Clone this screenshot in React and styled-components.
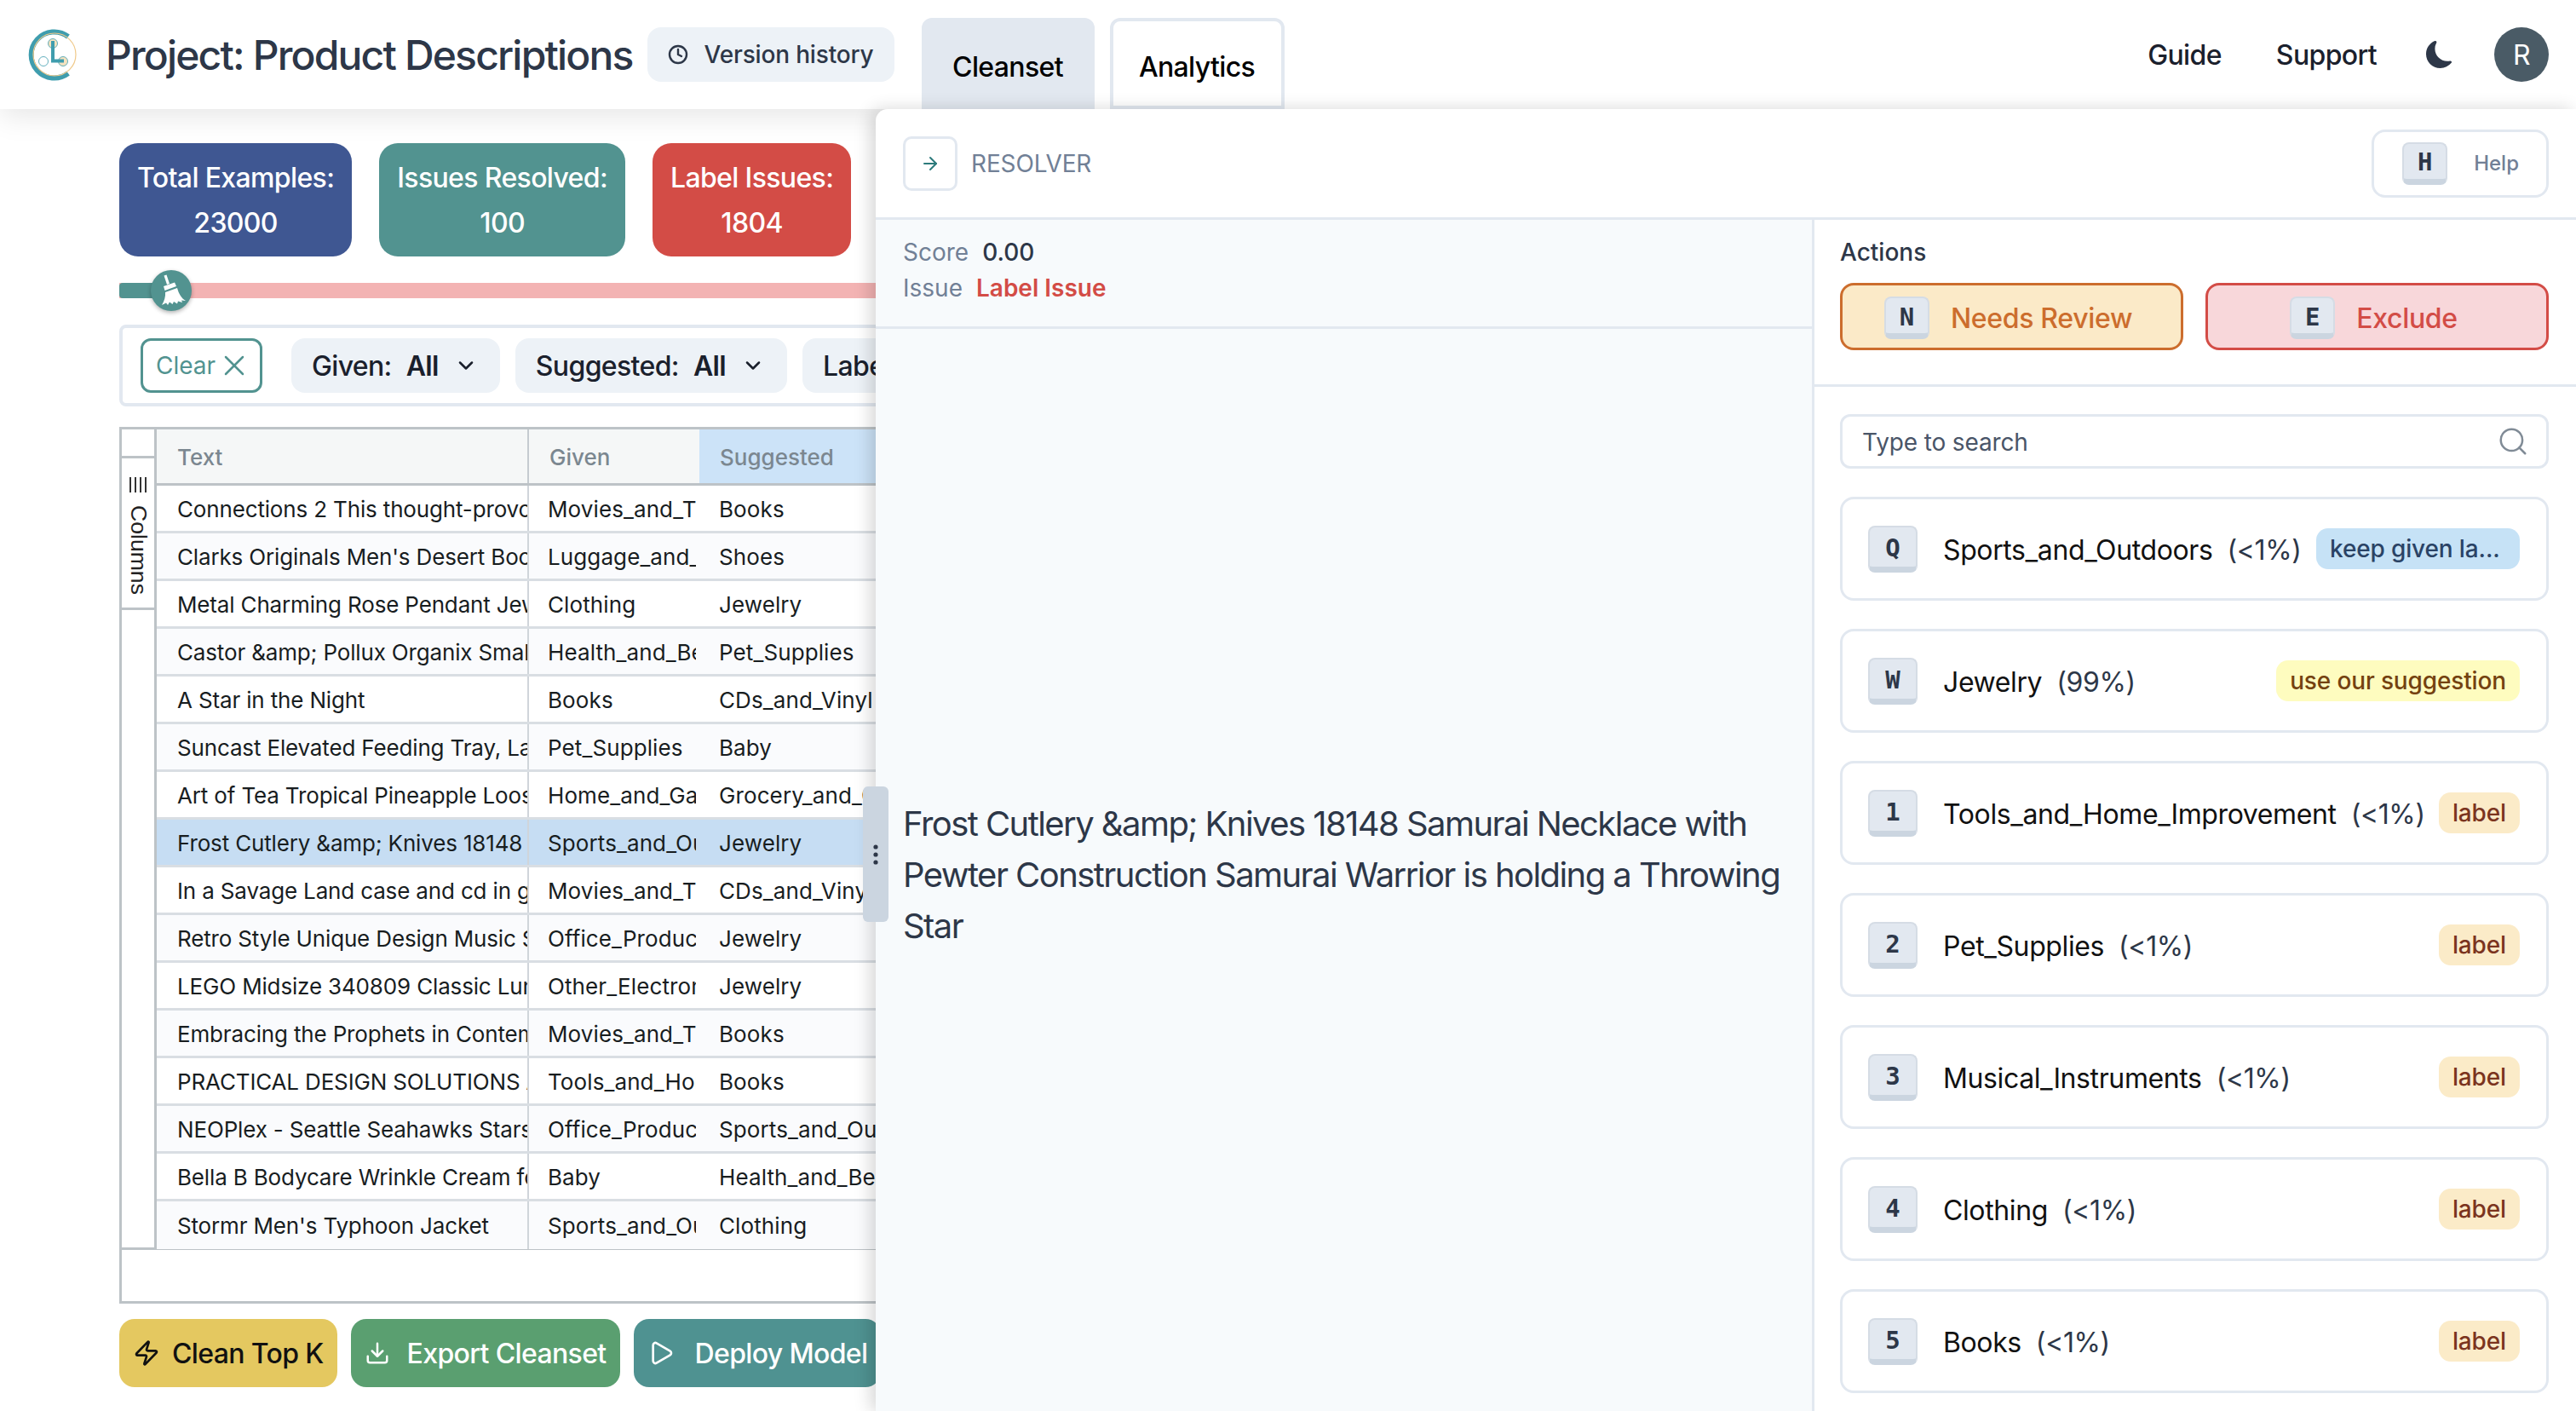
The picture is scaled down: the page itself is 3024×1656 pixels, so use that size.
import React from "react";
import styled, { createGlobalStyle } from "styled-components";
import { ArrowRight, ChevronDown, Clock, Download, Play, Search, X, Zap } from "lucide-react";
import { BsMoonFill } from "react-icons/bs";

const GlobalStyle = createGlobalStyle`
  html, body {
    margin: 0;
    padding: 0;
    background: #fff;
    font-family: Inter, "Liberation Sans", sans-serif;
    color: #2d3748;
  }
  * { box-sizing: border-box; }
`;

const Page = styled.div`
  position: relative;
  width: 3024px;
  height: 1656px;
  overflow: hidden;
  background: #fff;
`;

const Header = styled.header`
  position: relative;
  z-index: 2;
  display: flex;
  align-items: stretch;
  height: 128px;
  padding: 0 32px;
  background: #fff;
  box-shadow: 0 8px 32px rgba(0, 0, 0, 0.1);
`;
const LogoBox = styled.div`
  display: flex;
  align-items: center;
  width: 92px;
`;
const Title = styled.h1`
  align-self: center;
  margin: 0 17px 0 0;
  font-size: 48px;
  font-weight: 500;
  letter-spacing: -0.038em;
  color: #2d3748;
  white-space: nowrap;
`;
const VersionButton = styled.div`
  align-self: center;
  display: flex;
  align-items: center;
  gap: 19px;
  height: 64px;
  padding: 0 24px;
  border-radius: 16px;
  background: #edf2f7;
  font-size: 28px;
  font-weight: 500;
  letter-spacing: -0.006em;
  color: #2d3748;
`;
const Tabs = styled.nav`
  display: flex;
  align-items: flex-end;
  gap: 18px;
  margin-left: 32px;
`;
const Tab = styled.div`
  display: flex;
  align-items: center;
  justify-content: center;
  width: ${(p) => p.$width}px;
  height: 107px;
  padding-top: 7px;
  border: 4px solid #e2e8f0;
  border-radius: 12px 12px 0 0;
  background: ${(p) => (p.$active ? "#e2e8f0" : "#fff")};
  font-size: 32px;
  font-weight: 500;
  letter-spacing: -0.02em;
  color: #000;
`;
const HeaderRight = styled.div`
  display: flex;
  align-items: center;
  margin-left: auto;
  font-size: 32px;
  font-weight: 500;
  letter-spacing: -0.02em;
  color: #1a202c;
`;
const NavLink = styled.span`
  margin-right: 64px;
`;
const MoonBox = styled.span`
  display: flex;
  margin: 0 48px 0 -6px;
  color: #2d3748;
`;
const Avatar = styled.div`
  display: flex;
  align-items: center;
  justify-content: center;
  width: 64px;
  height: 64px;
  border-radius: 50%;
  background: #4a5b66;
  color: #fff;
  font-size: 32px;
  font-weight: 400;
`;

const Workspace = styled.main`
  width: 1200px;
  padding: 40px 0 0 140px;
`;
const Stats = styled.div`
  display: flex;
  gap: 32px;
`;
const Stat = styled.div`
  display: flex;
  flex-direction: column;
  align-items: center;
  justify-content: center;
  gap: 14px;
  height: 133px;
  padding: 0 21px;
  border-radius: 22px;
  background: ${(p) => p.$color};
  font-size: 32px;
  font-weight: 500;
  letter-spacing: -0.02em;
  line-height: 39px;
  color: #fff;
`;
const Slider = styled.div`
  position: relative;
  height: 18px;
  margin-top: 31px;
  background: #f3b3b3;
`;
const SliderFill = styled.div`
  width: 60px;
  height: 100%;
  border-radius: 4px 0 0 4px;
  background: #529390;
`;
const SliderThumb = styled.div`
  position: absolute;
  top: -15px;
  left: 37px;
  display: flex;
  width: 48px;
  height: 48px;
  border-radius: 50%;
  background: #529390;
  box-shadow: 0 2px 5px rgba(0, 0, 0, 0.3);
`;
const FilterBar = styled.div`
  display: flex;
  align-items: center;
  gap: 18px;
  height: 96px;
  margin-top: 31px;
  padding-left: 21px;
  border: 4px solid #e2e8f0;
  border-radius: 8px;
  white-space: nowrap;
`;
const ClearButton = styled.div`
  display: flex;
  flex: none;
  align-items: center;
  gap: 2px;
  width: 143px;
  height: 64px;
  margin-right: 16px;
  padding: 0 0 0 15px;
  border: 3px solid #529390;
  border-radius: 12px;
  font-size: 28px;
  color: #529390;
`;
const FilterChip = styled.div`
  display: flex;
  flex: none;
  align-items: center;
  height: 64px;
  padding: 0 26px 0 24px;
  border-radius: 16px;
  background: #edf2f7;
  font-size: 32px;
  font-weight: 500;
  letter-spacing: -0.02em;
  color: #1a202c;
  b {
    margin-left: 17px;
    font-weight: 600;
  }
  svg {
    margin-left: 18px;
  }
`;

const Grid = styled.div`
  height: 1029px;
  margin-top: 24px;
  border: 3px solid #bdc3c7;
  border-right: 0;
  background: #fff;
`;
const GridInner = styled.div`
  display: flex;
  height: 963px;
  border-bottom: 3px solid #bdc3c7;
`;
const SideStrip = styled.div`
  flex: none;
  width: 41px;
  padding-top: 31px;
  border-right: 3px solid #bdc3c7;
`;
const SideButton = styled.div`
  display: flex;
  align-items: center;
  justify-content: flex-start;
  gap: 15px;
  width: 38px;
  height: 181px;
  padding-top: 22px;
  border-top: 3px solid #bdc3c7;
  border-bottom: 3px solid #bdc3c7;
  writing-mode: vertical-rl;
  font-size: 26.6px;
  font-family: "Liberation Sans", Arial, sans-serif;
  color: #222;
`;
const GridBody = styled.div`
  flex: 1;
  min-width: 0;
`;
const HeadRow = styled.div`
  display: grid;
  grid-template-columns: 437px 200px 1fr;
  height: 66px;
  background: #f5f7f7;
  border-bottom: 3px solid #bdc3c7;
`;
const HeadCell = styled.div`
  display: flex;
  align-items: center;
  padding: 2px 0 0 ${(p) => p.$pad}px;
  border-right: ${(p) => (p.$line ? "2px solid #c5cbd0" : "0")};
  background: ${(p) => (p.$hot ? "#cce3f8" : "transparent")};
  font-size: 26px;
  font-weight: 500;
  color: #7b8790;
`;
const Row = styled.div`
  display: grid;
  grid-template-columns: 437px 200px 1fr;
  height: 56px;
  border-bottom: 3px solid #d9dee3;
  background: ${(p) => (p.$selected ? "#c6ddf3" : p.$odd ? "#fafbfd" : "#fff")};
  &:last-child {
    border-bottom: 0;
  }
`;
const Cell = styled.div`
  display: flex;
  align-items: center;
  overflow: hidden;
  margin-right: ${(p) => p.$gapRight || 0}px;
  padding: 1px 0 0 ${(p) => p.$pad}px;
  border-right: ${(p) => (p.$line ? "2px solid #d0d5da" : "0")};
  font-size: 26px;
  letter-spacing: ${(p) => (p.$line ? "-0.006em" : "0.004em")};
  color: #181d1f;
  white-space: nowrap;
`;
const ActionRow = styled.div`
  display: flex;
  gap: 16px;
  margin-top: 18px;
  white-space: nowrap;
`;
const ActionButton = styled.div`
  display: flex;
  flex: none;
  align-items: center;
  gap: ${(p) => p.$gap}px;
  height: 80px;
  padding: 0 16px;
  border-radius: 18px;
  background: ${(p) => p.$bg};
  color: ${(p) => p.$fg};
  font-size: 32px;
  font-weight: 500;
  letter-spacing: -0.02em;
`;

const Panel = styled.aside`
  position: absolute;
  z-index: 3;
  top: 128px;
  left: 1028px;
  right: 0;
  bottom: 0;
  display: flex;
  flex-direction: column;
  border-radius: 14px 0 0 0;
  background: #fff;
  box-shadow: -6px 0 20px rgba(0, 0, 0, 0.16);
`;
const PanelHead = styled.div`
  display: flex;
  flex: none;
  align-items: center;
  justify-content: space-between;
  height: 130px;
  padding: 0 32px;
  border-bottom: 3px solid #e2e8f0;
`;
const PanelTitle = styled.div`
  display: flex;
  align-items: center;
  gap: 16px;
  font-size: 28px;
  letter-spacing: -0.005em;
  color: #718096;
`;
const BackButton = styled.div`
  display: flex;
  align-items: center;
  justify-content: center;
  width: 64px;
  height: 64px;
  border: 3px solid #e2e8f0;
  border-radius: 10px;
  color: #2c7a7b;
`;
const HelpBox = styled.div`
  display: flex;
  align-items: center;
  gap: 31px;
  height: 80px;
  padding: 0 32px 0 33px;
  border: 3px solid #e2e8f0;
  border-radius: 16px;
  font-size: 24px;
  font-weight: 500;
  color: #718096;
`;
const Kbd = styled.span`
  display: flex;
  flex: none;
  align-items: center;
  justify-content: center;
  width: ${(p) => p.$w || 53}px;
  height: ${(p) => p.$h || 50}px;
  padding-top: 2px;
  border: 2px solid #d5dce5;
  border-bottom: 7px solid #cbd5e0;
  border-radius: 8px;
  background: #e2e8f0;
  font-family: "DejaVu Sans Mono", "Liberation Mono", monospace;
  font-size: 29px;
  font-weight: 700;
  letter-spacing: 0;
  color: #2d3748;
`;
const PanelBody = styled.div`
  display: flex;
  flex: 1;
  min-height: 0;
`;
const Detail = styled.section`
  display: flex;
  flex: none;
  flex-direction: column;
  width: 1099px;
  background: #f7fafc;
`;
const Meta = styled.div`
  display: flex;
  flex: none;
  flex-direction: column;
  gap: 8px;
  height: 128px;
  padding: 21px 32px 0;
  border-bottom: 3px solid #e2e8f0;
  font-size: 28px;
  line-height: 34px;
`;
const MetaLine = styled.div`
  display: flex;
  gap: 16px;
  span {
    color: #718096;
  }
  b {
    font-weight: ${(p) => (p.$issue ? 600 : 500)};
    color: ${(p) => (p.$issue ? "#d34c46" : "#2d3748")};
  }
`;
const Sample = styled.div`
  display: flex;
  flex: 1;
  align-items: center;
  padding: 12px 32px 0;
  font-size: 40px;
  letter-spacing: -0.039em;
  line-height: 60px;
  color: #2d3748;
`;
const Handle = styled.div`
  position: absolute;
  z-index: 4;
  top: 795px;
  left: -15px;
  display: flex;
  align-items: center;
  justify-content: center;
  width: 30px;
  height: 159px;
  border-radius: 6px;
  background: #cbd5e0;
  color: #2d3748;
`;
const Choices = styled.section`
  flex: 1;
  min-width: 0;
  border-left: 3px solid #e2e8f0;
  background: #fff;
`;
const ActionsBlock = styled.div`
  height: 196px;
  padding: 20px 32px 0 30px;
  border-bottom: 3px solid #e2e8f0;
  h3 {
    margin: 0;
    font-size: 28px;
    font-weight: 500;
    line-height: 36px;
    color: #2d3748;
  }
`;
const ActionPair = styled.div`
  display: grid;
  grid-template-columns: 1fr 1fr;
  gap: 26px;
  margin-top: 18px;
`;
const TriageButton = styled.div`
  display: flex;
  align-items: center;
  justify-content: center;
  gap: 25px;
  height: 79px;
  padding: 3px 8px 0 0;
  border: 3px solid ${(p) => p.$fg};
  border-radius: 16px;
  background: ${(p) => p.$bg};
  font-size: 32px;
  font-weight: 500;
  letter-spacing: -0.01em;
  color: ${(p) => p.$fg};
`;
const ChoiceList = styled.div`
  display: flex;
  flex-direction: column;
  gap: 33px;
  padding: 32px 32px 0 30px;
`;
const SearchBox = styled.div`
  display: flex;
  align-items: center;
  justify-content: space-between;
  height: 64px;
  padding: 2px 20px 0 23px;
  border: 3px solid #e2e8f0;
  border-radius: 12px;
  font-size: 28px;
  letter-spacing: -0.005em;
  color: #4a5568;
  svg {
    margin-top: -2px;
    color: #808b96;
  }
`;
const Choice = styled.div`
  display: flex;
  align-items: center;
  height: 122px;
  padding: 0 31px 0 30px;
  border: 3px solid #e2e8f0;
  border-radius: 16px;
  font-size: 32px;
  letter-spacing: -0.012em;
  white-space: nowrap;
`;
const ChoiceName = styled.span`
  margin: 3px 0 0 30px;
  color: #111;
`;
const ChoicePct = styled.span`
  margin: 3px 0 0 17px;
  color: #2d3748;
`;
const Badge = styled.span`
  display: flex;
  align-items: center;
  width: ${(p) => (p.$wide ? "239px" : "auto")};
  height: 48px;
  margin-left: auto;
  padding: 0 16px;
  border-radius: 14px;
  background: ${(p) => p.$bg};
  font-size: 28px;
  font-weight: 500;
  letter-spacing: -0.005em;
  color: ${(p) => p.$fg};
`;

const rows = [
  ["Connections 2 This thought-provoking", "Movies_and_TV", "Books"],
  ["Clarks Originals Men's Desert Boot", "Luggage_and_Travel", "Shoes"],
  ["Metal Charming Rose Pendant Jewelry", "Clothing", "Jewelry"],
  ["Castor &amp; Pollux Organix Small Breed", "Health_and_Beauty", "Pet_Supplies"],
  ["A Star in the Night", "Books", "CDs_and_Vinyl"],
  ["Suncast Elevated Feeding Tray, Large", "Pet_Supplies", "Baby"],
  ["Art of Tea Tropical Pineapple Loose Leaf", "Home_and_Garden", "Grocery_and_Gourmet"],
  ["Frost Cutlery &amp; Knives 18148 Samurai", "Sports_and_Outdoors", "Jewelry"],
  ["In a Savage Land case and cd in good", "Movies_and_TV", "CDs_and_Vinyl"],
  ["Retro Style Unique Design Music Staff", "Office_Products", "Jewelry"],
  ["LEGO Midsize 340809 Classic Lunch Box", "Other_Electronics", "Jewelry"],
  ["Embracing the Prophets in Contemporary", "Movies_and_TV", "Books"],
  ["PRACTICAL DESIGN SOLUTIONS AND", "Tools_and_Home", "Books"],
  ["NEOPlex - Seattle Seahawks Stars and", "Office_Products", "Sports_and_Outdoors"],
  ["Bella B Bodycare Wrinkle Cream for", "Baby", "Health_and_Beauty"],
  ["Stormr Men's Typhoon Jacket", "Sports_and_Outdoors", "Clothing"],
];

const choices = [
  { key: "Q", name: "Sports_and_Outdoors", pct: "(<1%)", badge: "keep given la...", bg: "#c6e2f6", fg: "#2a4365", wide: true },
  { key: "W", name: "Jewelry", pct: "(99%)", badge: "use our suggestion", bg: "#fefcbf", fg: "#744210" },
  { key: "1", name: "Tools_and_Home_Improvement", pct: "(<1%)" },
  { key: "2", name: "Pet_Supplies", pct: "(<1%)" },
  { key: "3", name: "Musical_Instruments", pct: "(<1%)" },
  { key: "4", name: "Clothing", pct: "(<1%)" },
  { key: "5", name: "Books", pct: "(<1%)" },
];

function Logo() {
  return (
    <svg width="62" height="62" viewBox="32 32 62 62" fill="none">
      <path d="M80 42A27 27 0 1 0 80 85" stroke="#3f9dae" strokeWidth="6" />
      <circle cx="64" cy="63" r="25" stroke="#f0c98a" strokeWidth="1.2" />
      <circle cx="62" cy="50" r="5.5" fill="#f5e2bf" stroke="#3f9dae" strokeWidth="0.8" />
      <circle cx="74" cy="71" r="5.5" fill="#f5e2bf" stroke="#3f9dae" strokeWidth="0.8" />
      <circle cx="51" cy="71" r="5.5" fill="#fff" stroke="#3f9dae" strokeWidth="0.8" />
      <path d="M62 47V70.5H75" stroke="#3f9dae" strokeWidth="4" />
    </svg>
  );
}

function BroomIcon() {
  return (
    <svg width="48" height="48" viewBox="0 0 48 48" fill="#fff">
      <path d="M15.5 6.5L18.5 5.5L22 16L19 17Z" />
      <path d="M15 19L28 14.5L30 19L16.5 24Z" />
      <path d="M17 26L31 21C33 28 36 33 41 36L36 35.5L37 38L32 36.5L31 39.5L27 37L25.5 40L22 37.5L20 41L18 38.5L13 41C16 36 17.5 31 17 26Z" />
    </svg>
  );
}

function ColumnsIcon() {
  return (
    <svg width="22" height="18" viewBox="0 0 22 18" stroke="#333" strokeWidth="2">
      <path d="M2 0V18M8 0V18M14 0V18M20 0V18" />
    </svg>
  );
}

export default function App() {
  return (
    <Page>
      <GlobalStyle />
      <Header>
        <LogoBox>
          <Logo />
        </LogoBox>
        <Title>Project: Product Descriptions</Title>
        <VersionButton>
          <Clock size={24} strokeWidth={2.4} />
          Version history
        </VersionButton>
        <Tabs>
          <Tab $active $width={203}>Cleanset</Tab>
          <Tab $width={205}>Analytics</Tab>
        </Tabs>
        <HeaderRight>
          <NavLink>Guide</NavLink>
          <NavLink>Support</NavLink>
          <MoonBox>
            <BsMoonFill size={32} />
          </MoonBox>
          <Avatar>R</Avatar>
        </HeaderRight>
      </Header>

      <Workspace>
        <Stats>
          <Stat $color="#3f5792">
            <span>Total Examples:</span>
            <span>23000</span>
          </Stat>
          <Stat $color="#529390">
            <span>Issues Resolved:</span>
            <span>100</span>
          </Stat>
          <Stat $color="#d34c46">
            <span>Label Issues:</span>
            <span>1804</span>
          </Stat>
        </Stats>
        <Slider>
          <SliderFill />
          <SliderThumb>
            <BroomIcon />
          </SliderThumb>
        </Slider>
        <FilterBar>
          <ClearButton>
            Clear
            <X size={40} strokeWidth={1.5} />
          </ClearButton>
          <FilterChip>
            Given: <b>All</b>
            <ChevronDown size={28} strokeWidth={2.2} />
          </FilterChip>
          <FilterChip>
            Suggested: <b>All</b>
            <ChevronDown size={28} strokeWidth={2.2} />
          </FilterChip>
          <FilterChip>
            Label Issues: <b>All</b>
          </FilterChip>
        </FilterBar>
        <Grid>
          <GridInner>
            <SideStrip>
              <SideButton>
                <ColumnsIcon />
                Columns
              </SideButton>
            </SideStrip>
            <GridBody>
              <HeadRow>
                <HeadCell $pad={24} $line>Text</HeadCell>
                <HeadCell $pad={24}>Given</HeadCell>
                <HeadCell $pad={24} $hot>Suggested</HeadCell>
              </HeadRow>
              {rows.map((r, i) => (
                <Row key={r[0]} $odd={i % 2 === 1} $selected={i === 7}>
                  <Cell $pad={24} $line>{r[0]}</Cell>
                  <Cell $pad={22} $gapRight={4}>{r[1]}</Cell>
                  <Cell $pad={23}>{r[2]}</Cell>
                </Row>
              ))}
            </GridBody>
          </GridInner>
        </Grid>
        <ActionRow>
          <ActionButton $bg="#e4c860" $fg="#111" $gap={14}>
            <Zap size={32} strokeWidth={2} />
            Clean Top K
          </ActionButton>
          <ActionButton $bg="#5a9f70" $fg="#fff" $gap={20}>
            <Download size={30} strokeWidth={2} />
            Export Cleanset
          </ActionButton>
          <ActionButton $bg="#4f9291" $fg="#fff" $gap={24}>
            <Play size={32} strokeWidth={2} />
            Deploy Model
          </ActionButton>
        </ActionRow>
      </Workspace>

      <Panel>
        <Handle>
          <svg width="6" height="24" viewBox="0 0 6 24" fill="currentColor">
            <circle cx="3" cy="3" r="2.6" />
            <circle cx="3" cy="12" r="2.6" />
            <circle cx="3" cy="21" r="2.6" />
          </svg>
        </Handle>
        <PanelHead>
          <PanelTitle>
            <BackButton>
              <ArrowRight size={24} strokeWidth={2} />
            </BackButton>
            RESOLVER
          </PanelTitle>
          <HelpBox>
            <Kbd>H</Kbd>
            Help
          </HelpBox>
        </PanelHead>
        <PanelBody>
          <Detail>
            <Meta>
              <MetaLine>
                <span>Score</span>
                <b>0.00</b>
              </MetaLine>
              <MetaLine $issue>
                <span>Issue</span>
                <b>Label Issue</b>
              </MetaLine>
            </Meta>
            <Sample>
              Frost Cutlery &amp;amp; Knives 18148 Samurai Necklace with Pewter Construction Samurai Warrior is holding a Throwing Star
            </Sample>
          </Detail>
          <Choices>
            <ActionsBlock>
              <h3>Actions</h3>
              <ActionPair>
                <TriageButton $bg="#fbeac8" $fg="#cc6d2d">
                  <Kbd>N</Kbd>
                  Needs Review
                </TriageButton>
                <TriageButton $bg="#f8d7da" $fg="#d34c46">
                  <Kbd>E</Kbd>
                  Exclude
                </TriageButton>
              </ActionPair>
            </ActionsBlock>
            <ChoiceList>
              <SearchBox>
                Type to search
                <Search size={38} strokeWidth={1.6} />
              </SearchBox>
              {choices.map((c) => (
                <Choice key={c.key}>
                  <Kbd $w={58} $h={55}>{c.key}</Kbd>
                  <ChoiceName>{c.name}</ChoiceName>
                  <ChoicePct>{c.pct}</ChoicePct>
                  <Badge $bg={c.bg || "#fbebc8"} $fg={c.fg || "#7b341e"} $wide={c.wide}>
                    {c.badge || "label"}
                  </Badge>
                </Choice>
              ))}
            </ChoiceList>
          </Choices>
        </PanelBody>
      </Panel>
    </Page>
  );
}
